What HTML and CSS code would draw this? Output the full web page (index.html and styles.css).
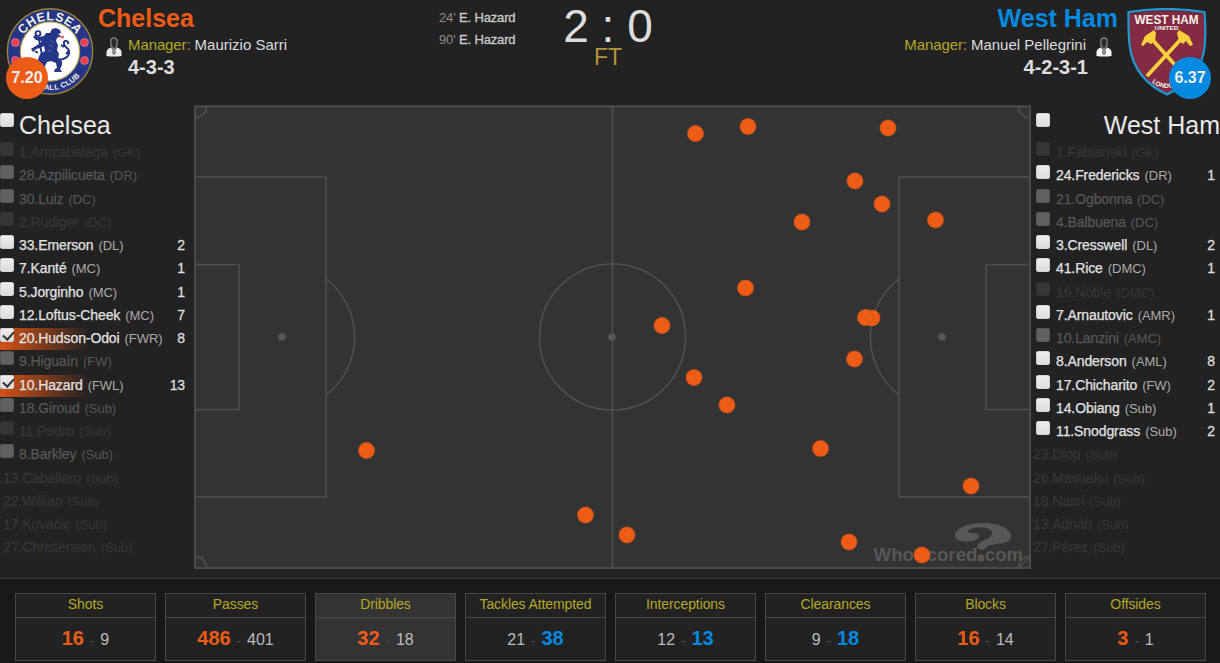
FILE: index.html
```
<!DOCTYPE html>
<html lang="en">
<head>
  <meta charset="utf-8">
  <title>Chelsea 2 : 0 West Ham</title>
  <link rel="stylesheet" href="styles.css">
</head>
<body>
  <header class="match-header">
    <div class="crest home">
      <svg width="88" height="88" viewBox="6 8 88 88">
        <defs>
          <path id="arcTop" d="M18.8 51.5a31.2 31.2 0 0 1 62.4 0" />
          <path id="arcBottom" d="M11.500 51.5a38.500 38.500 0 0 0 77 0" />
        </defs>
        <circle cx="50" cy="51.5" r="42.7" fill="#253587" stroke="#9b8432" stroke-width="1.4" />
        <circle cx="50" cy="51.5" r="29.6" fill="#fff" stroke="#b7a552" stroke-width="1.2" />
        <g fill="#e5404f" stroke="#f08a96" stroke-width=".7">
          <circle cx="15.5" cy="42.5" r="3.9" /><circle cx="84.5" cy="42.5" r="3.9" />
          <circle cx="15.5" cy="60.5" r="3.9" /><circle cx="84.5" cy="60.5" r="3.9" />
        </g>
        <text class="crest-top"><textPath href="#arcTop" startOffset="50%">CHELSEA</textPath></text>
        <text class="crest-bottom"><textPath href="#arcBottom" startOffset="50%">FOOTBALL CLUB</textPath></text>
        <g fill="#253587">
          <path d="M50 33l2-4 4-1 4 2 1 3-3 1 3 2-4 2-1 3 2 4-1 5 2 4-1 5 4 2v4l-2 4 2 3h-8l1-3 2-1-1-5-5-2-4 1-2 4 1 5-3 1h-4l1-3 1-5-4-2 3-8 5-3-1-5-4 2-4 1-3 3-2-3 3-2 5-3 3-3-6-1-3-3 2-2 4 2 5-1 2-3z" />
          <path d="M38.500 37l3.500 18M35 51l3 2" fill="none" stroke="#253587" stroke-width="1.900" />
          <circle cx="38" cy="33.500" r="2.400" fill="#fff" stroke="#253587" stroke-width="1.900" />
          <path d="M57 59c7 2 13-3 12-8-1-4-6-4-5-8 0-4 5-2 4 1M64 47l-3-2M69 51l-3 3" fill="none" stroke="#253587" stroke-width="2" />
        </g>
        <path d="M60 36.500l3 1 .5-1.500" stroke="#ee4455" fill="none" stroke-width="1.400" />
        <path d="M50 40l4 3M49 45l4 2M48 50l4 2" stroke="#8e98c4" fill="none" stroke-width=".6" />
      </svg>
      <span class="rating">7.20</span>
    </div>
    <div class="team home">
      <h1>Chelsea</h1>
      <div class="manager">
        <svg class="person" width="18" height="20" viewBox="0 0 18 20"><path d="M1.500 19v-4q0-3 4.500-4.500l3 4 3-4q4.500 1.500 4.500 4.500v4q-7.500 1-15 0z" fill="#ececec" /><path d="M7.800 12h2.400l1 4-2.200 2.500-2.200-2.500z" fill="#888" /><path d="M5.800 4q.4-3.200 3.200-3.200t3.200 3.200q.3 4-1 6l-2.200 2.500-2.200-2.500q-1.300-2-1-6z" fill="#2b2b2b" stroke="#858585" stroke-width="1.300" /></svg>
        <span class="label">Manager:</span><span>Maurizio Sarri</span>
      </div>
      <div class="formation">4-3-3</div>
    </div>
    <div class="goals">
      <div><span>24'</span> <b>E. Hazard</b></div>
      <div><span>90'</span> <b>E. Hazard</b></div>
    </div>
    <div class="score">
      <div class="result">2 : 0</div>
      <div class="status">FT</div>
    </div>
    <div class="team away">
      <h1>West Ham</h1>
      <div class="manager">
        <span class="label">Manager:</span><span>Manuel Pellegrini</span>
        <svg class="person" width="18" height="20" viewBox="0 0 18 20"><path d="M1.500 19v-4q0-3 4.500-4.500l3 4 3-4q4.500 1.500 4.500 4.500v4q-7.500 1-15 0z" fill="#f8f8f8" /><path d="M7.800 12h2.400l1 4-2.200 2.500-2.200-2.500z" fill="#888" /><path d="M5.800 4q.4-3.200 3.200-3.200t3.200 3.200q.3 4-1 6l-2.200 2.500-2.200-2.500q-1.300-2-1-6z" fill="#2b2b2b" stroke="#858585" stroke-width="1.300" /></svg>
      </div>
      <div class="formation">4-2-3-1</div>
    </div>
    <div class="crest away">
      <svg width="80" height="88" viewBox="1127 8 80 88">
        <path d="M1128.500 12q38-6 76 0c1 13 1 27 0 36-3 25-20 38-37.500 46.500-17-8-33-21-37-46.500-2-13-1.500-25-1.500-36z" fill="#842a42" stroke="#1a9ad3" stroke-width="2.200" />
        <path d="M1130.500 14q36-5.500 72 0" fill="none" stroke="#49313f" stroke-width="1" />
        <text class="crest-west" x="1166.500" y="24" textLength="64" lengthAdjust="spacingAndGlyphs">WEST HAM</text>
        <text class="crest-united" x="1166.500" y="29.500" textLength="24" lengthAdjust="spacingAndGlyphs">UNITED</text>
        <g stroke="#fbd13b" fill="#fbd13b">
          <path d="M1150 37l34 38M1183 37l-36 39" stroke-width="3.800" />
          <path d="M1141 45l4-9 9-6 2 3-1 8-4 3-4-2-4 4zM1193 45l-4-9-10-6-2 3 2 8 4 3 3-3 4 5z" stroke="none" />
        </g>
        <path id="londonArc" d="M1150 81q16 14 35 0" fill="none" />
        <text class="crest-london"><textPath href="#londonArc" startOffset="2">LONDON</textPath></text>
      </svg>
      <span class="rating">6.37</span>
    </div>
  </header>

  <main class="chalkboard">
    <section class="squad home">
      <h2><input type="checkbox"><span>Chelsea</span></h2>
      <ul>
        <li class="none"><input type="checkbox"><span>1.Arrizabalaga</span><i>(GK)</i></li>
        <li class="dim"><input type="checkbox"><span>28.Azpilicueta</span><i>(DR)</i></li>
        <li class="dim"><input type="checkbox"><span>30.Luiz</span><i>(DC)</i></li>
        <li class="none"><input type="checkbox"><span>2.Rüdiger</span><i>(DC)</i></li>
        <li><input type="checkbox"><span>33.Emerson</span><i>(DL)</i><b>2</b></li>
        <li><input type="checkbox"><span>7.Kanté</span><i>(MC)</i><b>1</b></li>
        <li><input type="checkbox"><span>5.Jorginho</span><i>(MC)</i><b>1</b></li>
        <li><input type="checkbox"><span>12.Loftus-Cheek</span><i>(MC)</i><b>7</b></li>
        <li class="selected"><input type="checkbox" checked><span>20.Hudson-Odoi</span><i>(FWR)</i><b>8</b></li>
        <li class="dim"><input type="checkbox"><span>9.Higuaín</span><i>(FW)</i></li>
        <li class="selected"><input type="checkbox" checked><span>10.Hazard</span><i>(FWL)</i><b>13</b></li>
        <li class="dim"><input type="checkbox"><span>18.Giroud</span><i>(Sub)</i></li>
        <li class="none"><input type="checkbox"><span>11.Pedro</span><i>(Sub)</i></li>
        <li class="dim"><input type="checkbox"><span>8.Barkley</span><i>(Sub)</i></li>
        <li class="unused"><span>13.Caballero</span><i>(Sub)</i></li>
        <li class="unused"><span>22.Willian</span><i>(Sub)</i></li>
        <li class="unused"><span>17.Kovacic</span><i>(Sub)</i></li>
        <li class="unused"><span>27.Christensen</span><i>(Sub)</i></li>
      </ul>
    </section>

    <svg class="pitch" width="837" height="464" viewBox="194 105 837 464">
      <rect x="194" y="105" width="837" height="464" fill="#333" />
      <g class="lines">
        <rect class="touchline" x="195" y="106.500" width="835" height="461.500" />
        <path d="M612.500 106v462" />
        <circle cx="612.500" cy="337" r="73" />
        <path d="M195 177h131v320h-131M195 264.500h44v145h-44M326 279a73 73 0 0 1 0 116" />
        <path d="M1030 177h-131v320h131M1030 264.500h-44v145h44M899 279a73 73 0 0 0 0 116" />
        <path d="M206.500 106a11 11 0 0 1-11.500 11.500M1018.500 106a11 11 0 0 0 11.500 11.500M195 556.500a11 11 0 0 1 11.500 11.500M1030 556.500a11 11 0 0 0-11.500 11.500l10-10" />
      </g>
      <g fill="#575757">
        <circle cx="282" cy="337" r="3.800" /><circle cx="612" cy="337" r="3.800" /><circle cx="942" cy="337" r="3.800" />
      </g>
      <g class="watermark">
        <text x="873.500" y="561" textLength="104" lengthAdjust="spacingAndGlyphs">WhoScored</text>
        <text x="985" y="561" textLength="38" lengthAdjust="spacingAndGlyphs">com</text>
        <circle cx="981" cy="558" r="3.400" />
        <path d="M955 536c0-8 13-13 28-13 17 0 28 6 28 13 0 6-7 7-14 8-6 1-9 1-11 4-2 3-9 2-9-1 1-6 9-7 13-10 4-4 2-8-4-9-9-2-18 1-18 4-1 2 11-1 11 4 0 7-24 8-24 0z" />
      </g>
      <g class="dribbles">
        <circle cx="695.500" cy="133.500" r="8" /><circle cx="748" cy="126.500" r="8" /><circle cx="888" cy="128" r="8" />
        <circle cx="855" cy="181" r="8" /><circle cx="882" cy="204" r="8" /><circle cx="935.500" cy="220" r="8" />
        <circle cx="802" cy="222" r="8" /><circle cx="745.500" cy="288" r="8" /><circle cx="662" cy="325.500" r="8" />
        <circle cx="872" cy="318" r="8" /><circle cx="865.500" cy="317.500" r="8" /><circle cx="854.500" cy="359" r="8" />
        <circle cx="694" cy="377.500" r="8" /><circle cx="727" cy="405" r="8" /><circle cx="820.500" cy="448.500" r="8" />
        <circle cx="366.500" cy="450.500" r="8" /><circle cx="971" cy="486" r="8" /><circle cx="585.500" cy="515" r="8" />
        <circle cx="627" cy="535" r="8" /><circle cx="849" cy="542" r="8" /><circle cx="922" cy="555" r="8" />
      </g>
    </svg>

    <section class="squad away">
      <h2><input type="checkbox"><span>West Ham</span></h2>
      <ul>
        <li class="none"><input type="checkbox"><span>1.Fabianski</span><i>(GK)</i></li>
        <li><input type="checkbox"><span>24.Fredericks</span><i>(DR)</i><b>1</b></li>
        <li class="dim"><input type="checkbox"><span>21.Ogbonna</span><i>(DC)</i></li>
        <li class="dim"><input type="checkbox"><span>4.Balbuena</span><i>(DC)</i></li>
        <li><input type="checkbox"><span>3.Cresswell</span><i>(DL)</i><b>2</b></li>
        <li><input type="checkbox"><span>41.Rice</span><i>(DMC)</i><b>1</b></li>
        <li class="none"><input type="checkbox"><span>16.Noble</span><i>(DMC)</i></li>
        <li><input type="checkbox"><span>7.Arnautovic</span><i>(AMR)</i><b>1</b></li>
        <li class="dim"><input type="checkbox"><span>10.Lanzini</span><i>(AMC)</i></li>
        <li><input type="checkbox"><span>8.Anderson</span><i>(AML)</i><b>8</b></li>
        <li><input type="checkbox"><span>17.Chicharito</span><i>(FW)</i><b>2</b></li>
        <li><input type="checkbox"><span>14.Obiang</span><i>(Sub)</i><b>1</b></li>
        <li><input type="checkbox"><span>11.Snodgrass</span><i>(Sub)</i><b>2</b></li>
        <li class="unused"><span>23.Diop</span><i>(Sub)</i></li>
        <li class="unused"><span>26.Masuaku</span><i>(Sub)</i></li>
        <li class="unused"><span>18.Nasri</span><i>(Sub)</i></li>
        <li class="unused"><span>13.Adrián</span><i>(Sub)</i></li>
        <li class="unused"><span>27.Pérez</span><i>(Sub)</i></li>
      </ul>
    </section>
  </main>

  <nav class="stats">
    <div class="stat"><h3>Shots</h3><p><b class="home-win">16</b><i>-</i><span>9</span></p></div>
    <div class="stat"><h3>Passes</h3><p><b class="home-win">486</b><i>-</i><span>401</span></p></div>
    <div class="stat active"><h3>Dribbles</h3><p><b class="home-win">32</b><i>-</i><span>18</span></p></div>
    <div class="stat"><h3>Tackles Attempted</h3><p><span>21</span><i>-</i><b class="away-win">38</b></p></div>
    <div class="stat"><h3>Interceptions</h3><p><span>12</span><i>-</i><b class="away-win">13</b></p></div>
    <div class="stat"><h3>Clearances</h3><p><span>9</span><i>-</i><b class="away-win">18</b></p></div>
    <div class="stat"><h3>Blocks</h3><p><b class="home-win">16</b><i>-</i><span>14</span></p></div>
    <div class="stat"><h3>Offsides</h3><p><b class="home-win">3</b><i>-</i><span>1</span></p></div>
  </nav>
</body>
</html>
```
FILE: styles.css
```
* {
  box-sizing: border-box;
}

body {
  margin: 0;
  width: 1220px;
  height: 663px;
  overflow: hidden;
  background: #222;
  color: #ddd;
  font-family: "Liberation Sans", Arial, sans-serif;
}

h1, h2, h3, p, ul {
  margin: 0;
  padding: 0;
}

i {
  font-style: normal;
}

/* Header */
.match-header {
  display: grid;
  grid-template-columns: 98px 341px 106px 126px 447px 102px;
  height: 105px;
}

.crest {
  position: relative;
  padding-top: 8px;
}

.crest svg {
  display: block;
}

.crest.home {
  padding-left: 6px;
}

.crest.away {
  padding-left: 9px;
}

.crest text {
  fill: #f4f2e6;
  font-weight: bold;
  text-anchor: middle;
}

.crest .crest-top {
  font-size: 12.5px;
  letter-spacing: 0.5px;
}

.crest .crest-bottom {
  font-size: 7.5px;
  letter-spacing: 0.4px;
}

.crest .crest-west {
  font-size: 12.5px;
}

.crest .crest-united {
  font-size: 6px;
}

.crest .crest-london {
  font-size: 6.5px;
  text-anchor: start;
}

.rating {
  position: absolute;
  top: 57px;
  left: 6px;
  width: 42px;
  height: 42px;
  border-radius: 50%;
  background: #ed5c16;
  color: #eee;
  font-size: 16px;
  font-weight: bold;
  line-height: 42px;
  text-align: center;
}

.away .rating {
  left: 51px;
  background: #0489e0;
}

.team h1 {
  padding-top: 4px;
  font-size: 25px;
  line-height: 29px;
  color: #ed5c16;
}

.team.away {
  text-align: right;
}

.team.away h1 {
  color: #0489e0;
}

.manager {
  display: flex;
  gap: 4px;
  height: 24px;
  padding-left: 7px;
  font-size: 15px;
  line-height: 24px;
}

.manager .label {
  color: #b5a727;
  letter-spacing: -0.1px;
}

.manager .person {
  flex: none;
  margin: 4px 1px 0 0;
}

.away .manager {
  justify-content: flex-end;
  padding-right: 5px;
}

.away .manager .person {
  margin: 4px 0 0 5px;
}

.formation {
  padding-left: 30px;
  font-size: 20px;
  font-weight: bold;
  line-height: 20px;
}

.away .formation {
  padding-right: 30px;
}

.goals {
  padding-top: 7px;
  font-size: 13px;
  line-height: 22px;
  letter-spacing: -0.15px;
  white-space: nowrap;
}

.goals span {
  color: #8c8c8c;
}

.goals b {
  font-weight: normal;
  color: #ccc;
  -webkit-text-stroke: 0.3px #ccc;
}

.score {
  text-align: center;
}

.result {
  height: 44px;
  font-size: 46px;
  line-height: 53px;
}

.status {
  font-size: 23px;
  line-height: 27px;
  color: #b2943c;
}

/* Player lists and pitch */
.chalkboard {
  display: grid;
  grid-template-columns: 194px 837px 189px;
  height: 473px;
}

.pitch {
  display: block;
}

.squad h2 {
  display: flex;
  justify-content: space-between;
  height: 37px;
  padding-top: 4px;
  font-size: 25px;
  font-weight: normal;
  line-height: 32px;
  color: #e8e8e8;
}

.squad.home h2 {
  justify-content: flex-start;
}

.squad h2 input {
  margin-top: 4px;
}

.squad ul {
  list-style: none;
}

.squad li {
  display: flex;
  height: 23.25px;
  padding-right: 9px;
  font-size: 14px;
  line-height: 21px;
  letter-spacing: -0.1px;
  white-space: nowrap;
}

.squad.away {
  padding-left: 5px;
}

.squad.away li {
  padding-right: 5px;
}

.squad li span {
  color: #e2e2e2;
  -webkit-text-stroke: 0.25px;
}

.squad li i {
  margin-left: 5px;
  font-size: 13px;
  letter-spacing: -0.05px;
  color: #aaa;
}

.squad li b {
  margin-left: auto;
  font-weight: normal;
  -webkit-text-stroke: 0.3px;
}

.squad li.selected {
  background: linear-gradient(97deg, #c95018 0, #c95018 7px, #222 90px) no-repeat 0 0 / 100% 22px;
}

.squad li.dim span,
.squad li.dim i {
  color: #575757;
}

.squad li.none span,
.squad li.none i,
.squad li.unused span,
.squad li.unused i {
  color: #363636;
}

.squad li.unused {
  padding-left: 3px;
}

.squad.away li.unused {
  margin-left: -3px;
  padding-left: 0;
}

input[type=checkbox] {
  appearance: none;
  position: relative;
  flex: none;
  width: 14px;
  height: 14px;
  margin: 0 5px 0 0;
  border: 1px solid #d2d2d2;
  border-radius: 2px;
  background: linear-gradient(#eee, #dcdcdc);
}

.squad.away input {
  margin-right: 6px;
}

.dim input[type=checkbox] {
  border-color: #555;
  background: #606060;
}

.none input[type=checkbox] {
  border-color: #303030;
  background: #363636;
}

input[type=checkbox]:checked::after {
  content: "";
  position: absolute;
  top: 0;
  left: 4px;
  width: 5px;
  height: 9px;
  border: solid #333;
  border-width: 0 2.5px 2.5px 0;
  transform: rotate(42deg);
}

.lines {
  fill: none;
  stroke: #505050;
  stroke-width: 1.5;
}

.lines .touchline {
  stroke: #4a4a4a;
  stroke-width: 2;
}

.watermark {
  fill: #575757;
  font-size: 19px;
  font-weight: bold;
}

.dribbles {
  fill: #ed5c16;
  stroke: #c9521b;
  stroke-width: 0.8;
}

/* Stat tabs */
.stats {
  display: flex;
  gap: 9px;
  height: 85px;
  padding: 14px 0 2px 15px;
  border-top: 1px solid #3c3c3c;
  background: #181818;
}

.stat {
  flex: none;
  width: 141px;
  height: 68px;
  border: 1px solid #484848;
  background: #222;
  text-align: center;
}

.stat.active {
  background: #333;
}

.stat h3 {
  height: 24px;
  border-bottom: 1px solid #484848;
  font-size: 14px;
  font-weight: normal;
  line-height: 21px;
  letter-spacing: -0.1px;
  color: #b5a727;
}

.stat p {
  display: flex;
  justify-content: center;
  align-items: baseline;
  gap: 6px;
  font-size: 16px;
  line-height: 41px;
  color: #bbb;
}

.stat b {
  font-size: 20px;
}

.stat i {
  font-size: 13px;
  color: #555;
}

.stat .home-win {
  color: #ed5c16;
}

.stat .away-win {
  color: #0489e0;
}
```
